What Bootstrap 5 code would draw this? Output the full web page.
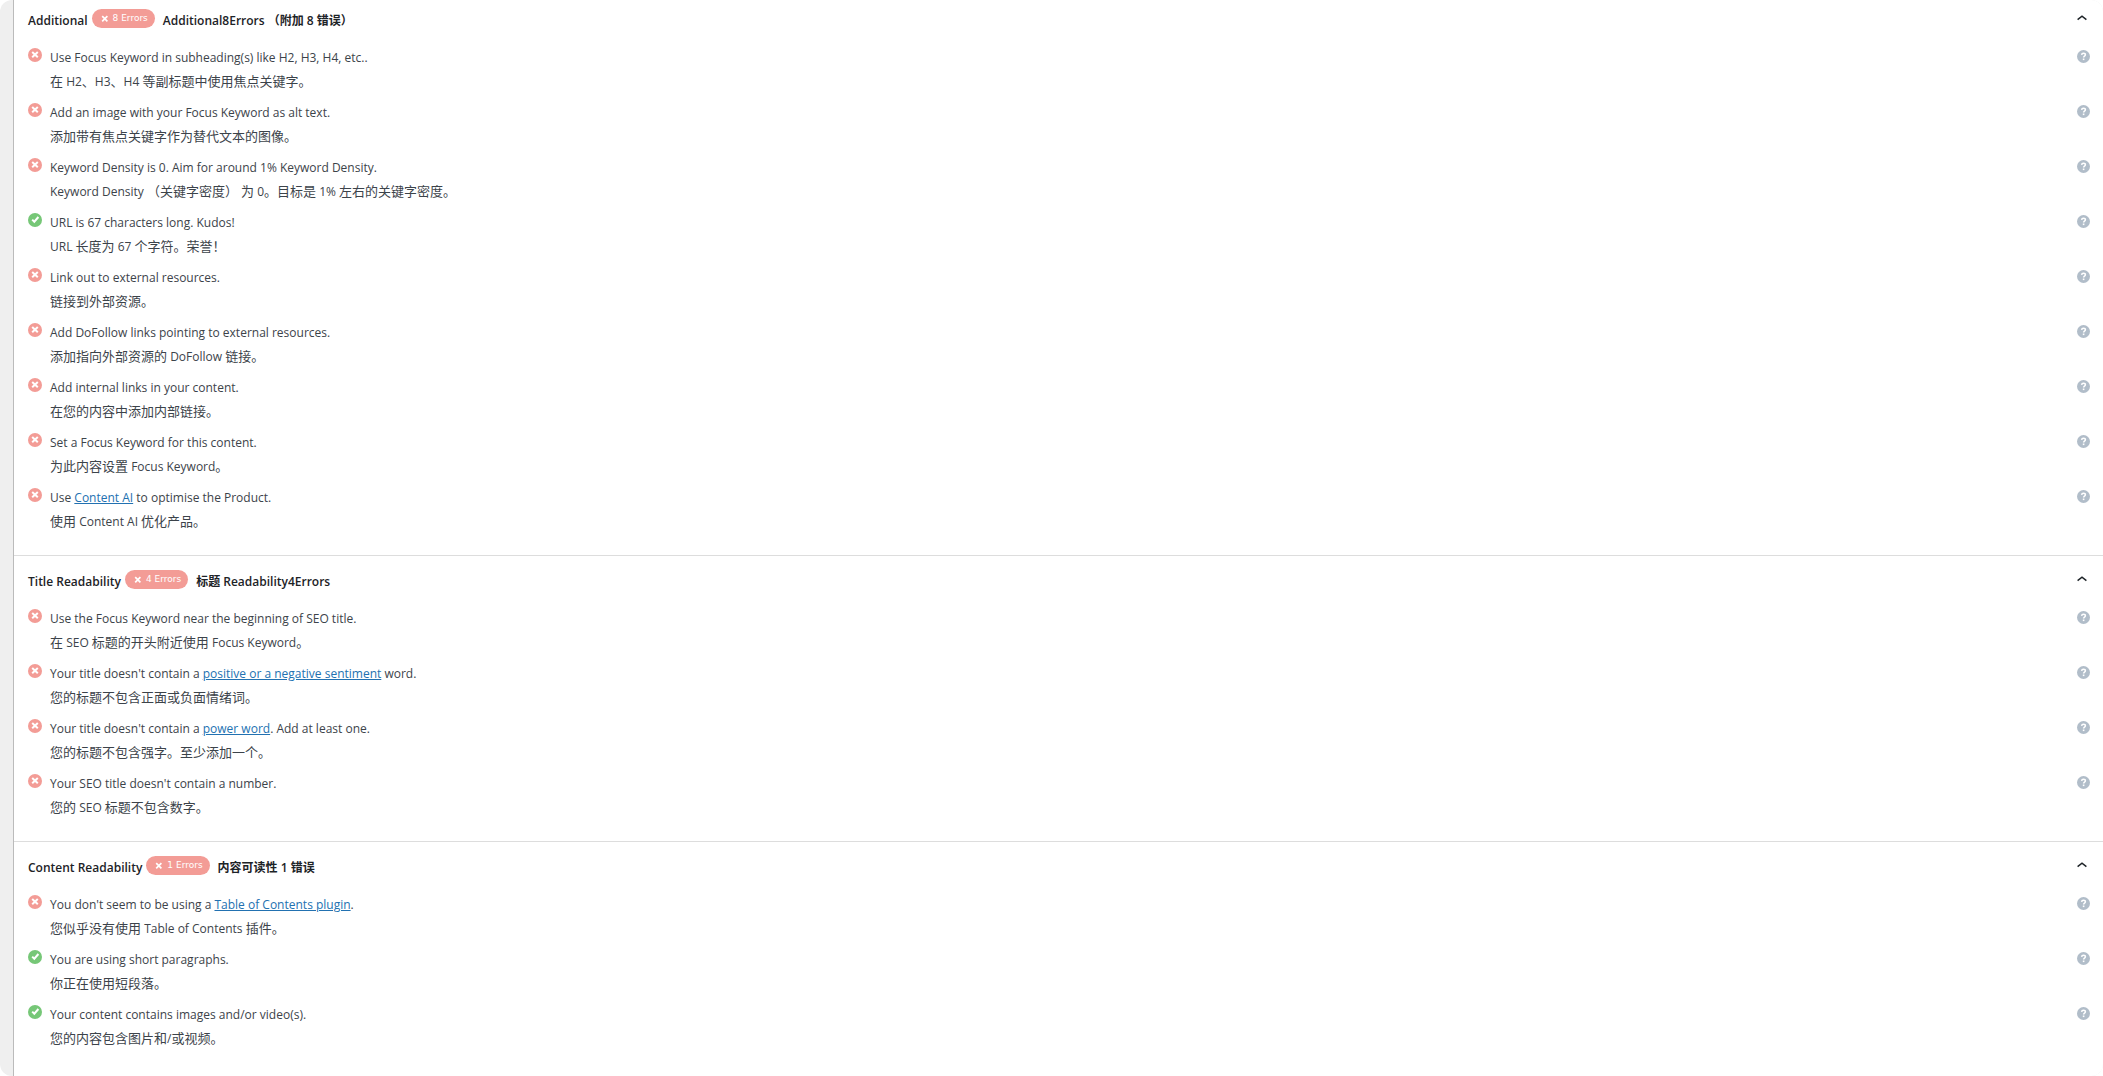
<!DOCTYPE html>
<html lang="en">
<head>
<meta charset="utf-8">
<meta name="viewport" content="width=device-width, initial-scale=1">
<title>SEO analysis</title>
<link href="https://cdn.jsdelivr.net/npm/bootstrap@5.3.0/dist/css/bootstrap.min.css" rel="stylesheet">
<style>
  body { font-family: "Open Sans", "Noto Sans CJK SC", sans-serif; font-size: 12px; line-height: 24px; color: #3c434a; background: #fff; }
  .seo-shell { background: #efefef; border-radius: 12px; padding-left: 13px; overflow: hidden; }
  .seo-panel { background: #fff; border-left: 1px solid #bbb; }
  .seo-group { padding: 14px 13px 15px 14px; border-bottom: 1px solid #ddd; }
  .seo-group:first-child { padding-top: 9px; }
  .seo-group:last-child { border-bottom: 0; }
  .seo-head { height: 36px; }
  .seo-title { font-size: 12px; line-height: 24px; font-weight: 600; color: #1d2327; }
  .seo-pill { height: 19px; margin: 0 8px 0 4px; padding: 0 7px 0 9px; font-family: "DejaVu Sans", sans-serif; font-size: 9px; line-height: 19px; font-weight: 400; color: #fff; background: #f39c96; border-radius: 10px; }
  .seo-toggle { width: 16px; height: 18px; color: #1d2327; background: none; }
  .seo-item { margin-bottom: 6px; }
  .seo-state { width: 14px; height: 14px; margin: 3px 8px 0 0; }
  .seo-help { width: 13px; height: 13px; margin-top: 5px; color: #b1bdc9; }
  .seo-text { padding-top: 1px; }
  .seo-text p { height: 24px; margin: 0; }
  .seo-text a { color: #2271b1; }
  .seo-han { font-size: 13px; line-height: 1; }
</style>
<script src="https://cdn.jsdelivr.net/npm/bootstrap@5.3.0/dist/js/bootstrap.bundle.min.js"></script>
</head>
<body>
<svg class="d-none" xmlns="http://www.w3.org/2000/svg">
  <symbol id="bad" viewBox="0 0 14 14"><circle cx="7" cy="7" r="7" fill="#f39c96"/><path d="M4.2 4.1l5.6 5.2M9.8 4.1L4.2 9.3" stroke="#fff" stroke-width="2" fill="none"/></symbol>
  <symbol id="good" viewBox="0 0 14 14"><circle cx="7" cy="7" r="7" fill="#76c777"/><path d="M4.2 6.6l2.1 2.1L10.4 4" stroke="#fff" stroke-width="2" fill="none"/></symbol>
  <symbol id="cross" viewBox="0 0 8 8"><path d="M1.2 1.2l5.2 5.2M6.4 1.2L1.2 6.4" stroke="#fff" stroke-width="1.7" fill="none"/></symbol>
  <symbol id="help" viewBox="0 0 13 13"><circle cx="6.5" cy="6.5" r="6.5" fill="currentColor"/><path d="M4.6 4.9C4.7 3.7 5.5 3.2 6.5 3.2c1.1 0 1.9.6 1.9 1.6 0 1.3-1.8 1.3-1.8 2.7" stroke="#fff" stroke-width="1.5" fill="none"/><rect x="5.8" y="8.5" width="1.6" height="1.6" fill="#fff"/></symbol>
  <symbol id="up" viewBox="0 0 10 6"><path d="M.6 4.6L5 1.2l4.4 3.4" stroke="currentColor" stroke-width="1.5" fill="none"/></symbol>
</svg>
<div class="seo-shell min-vh-100 d-flex">
<main class="seo-panel flex-grow-1" id="panel">
</main>
</div>
<script>
  const groups = [
    { title: 'Additional', errors: 8, zh: 'Additional8Errors （附加 8 错误）', items: [
      [0, 'Use Focus Keyword in subheading(s) like H2, H3, H4, etc..', '在 H2、H3、H4 等副标题中使用焦点关键字。'],
      [0, 'Add an image with your Focus Keyword as alt text.', '添加带有焦点关键字作为替代文本的图像。'],
      [0, 'Keyword Density is 0. Aim for around 1% Keyword Density.', 'Keyword Density （关键字密度） 为 0。目标是 1% 左右的关键字密度。'],
      [1, 'URL is 67 characters long. Kudos!', 'URL 长度为 67 个字符。荣誉！'],
      [0, 'Link out to external resources.', '链接到外部资源。'],
      [0, 'Add DoFollow links pointing to external resources.', '添加指向外部资源的 DoFollow 链接。'],
      [0, 'Add internal links in your content.', '在您的内容中添加内部链接。'],
      [0, 'Set a Focus Keyword for this content.', '为此内容设置 Focus Keyword。'],
      [0, 'Use <a href="#">Content AI</a> to optimise the Product.', '使用 Content AI 优化产品。']
    ]},
    { title: 'Title Readability', errors: 4, zh: '标题 Readability4Errors', items: [
      [0, 'Use the Focus Keyword near the beginning of SEO title.', '在 SEO 标题的开头附近使用 Focus Keyword。'],
      [0, 'Your title doesn\'t contain a <a href="#">positive or a negative sentiment</a> word.', '您的标题不包含正面或负面情绪词。'],
      [0, 'Your title doesn\'t contain a <a href="#">power word</a>. Add at least one.', '您的标题不包含强字。至少添加一个。'],
      [0, 'Your SEO title doesn\'t contain a number.', '您的 SEO 标题不包含数字。']
    ]},
    { title: 'Content Readability', errors: 1, zh: '内容可读性 1 错误', items: [
      [0, 'You don\'t seem to be using a <a href="#">Table of Contents plugin</a>.', '您似乎没有使用 Table of Contents 插件。'],
      [1, 'You are using short paragraphs.', '你正在使用短段落。'],
      [1, 'Your content contains images and/or video(s).', '您的内容包含图片和/或视频。']
    ]}
  ];
  // Han characters are set one size above the Latin text beside them
  const han = s => s.replace(/[\u3000-\u9fff\uff00-\uffef]+/g, '<span class="seo-han">$&</span>');
  document.getElementById('panel').innerHTML = groups.map((g, i) => `
    <section class="seo-group">
      <div class="seo-head d-flex justify-content-between align-items-start">
        <h2 class="seo-title d-flex m-0"><span>${g.title}</span>
          <span class="seo-pill d-inline-flex align-items-center gap-1"><svg width="8" height="8" aria-hidden="true"><use href="#cross"/></svg>${g.errors} Errors</span>
          <span lang="zh-CN">${g.zh}</span></h2>
        <button type="button" class="seo-toggle border-0 p-0 d-flex align-items-center justify-content-center" aria-label="Toggle ${g.title}" aria-expanded="true" aria-controls="list${i}"><svg width="10" height="6"><use href="#up"/></svg></button>
      </div>
      <ul class="list-unstyled m-0" id="list${i}">${g.items.map(([ok, en, zh]) => `
        <li class="seo-item d-flex align-items-start">
          <svg class="seo-state flex-shrink-0" aria-hidden="true"><use href="#${ok ? 'good' : 'bad'}"/></svg>
          <div class="seo-text flex-grow-1"><p>${en}</p><p lang="zh-CN">${han(zh)}</p></div>
          <a class="seo-help d-flex flex-shrink-0" href="#" aria-label="Help"><svg width="13" height="13"><use href="#help"/></svg></a>
        </li>`).join('')}
      </ul>
    </section>`).join('');
</script>
</body>
</html>
